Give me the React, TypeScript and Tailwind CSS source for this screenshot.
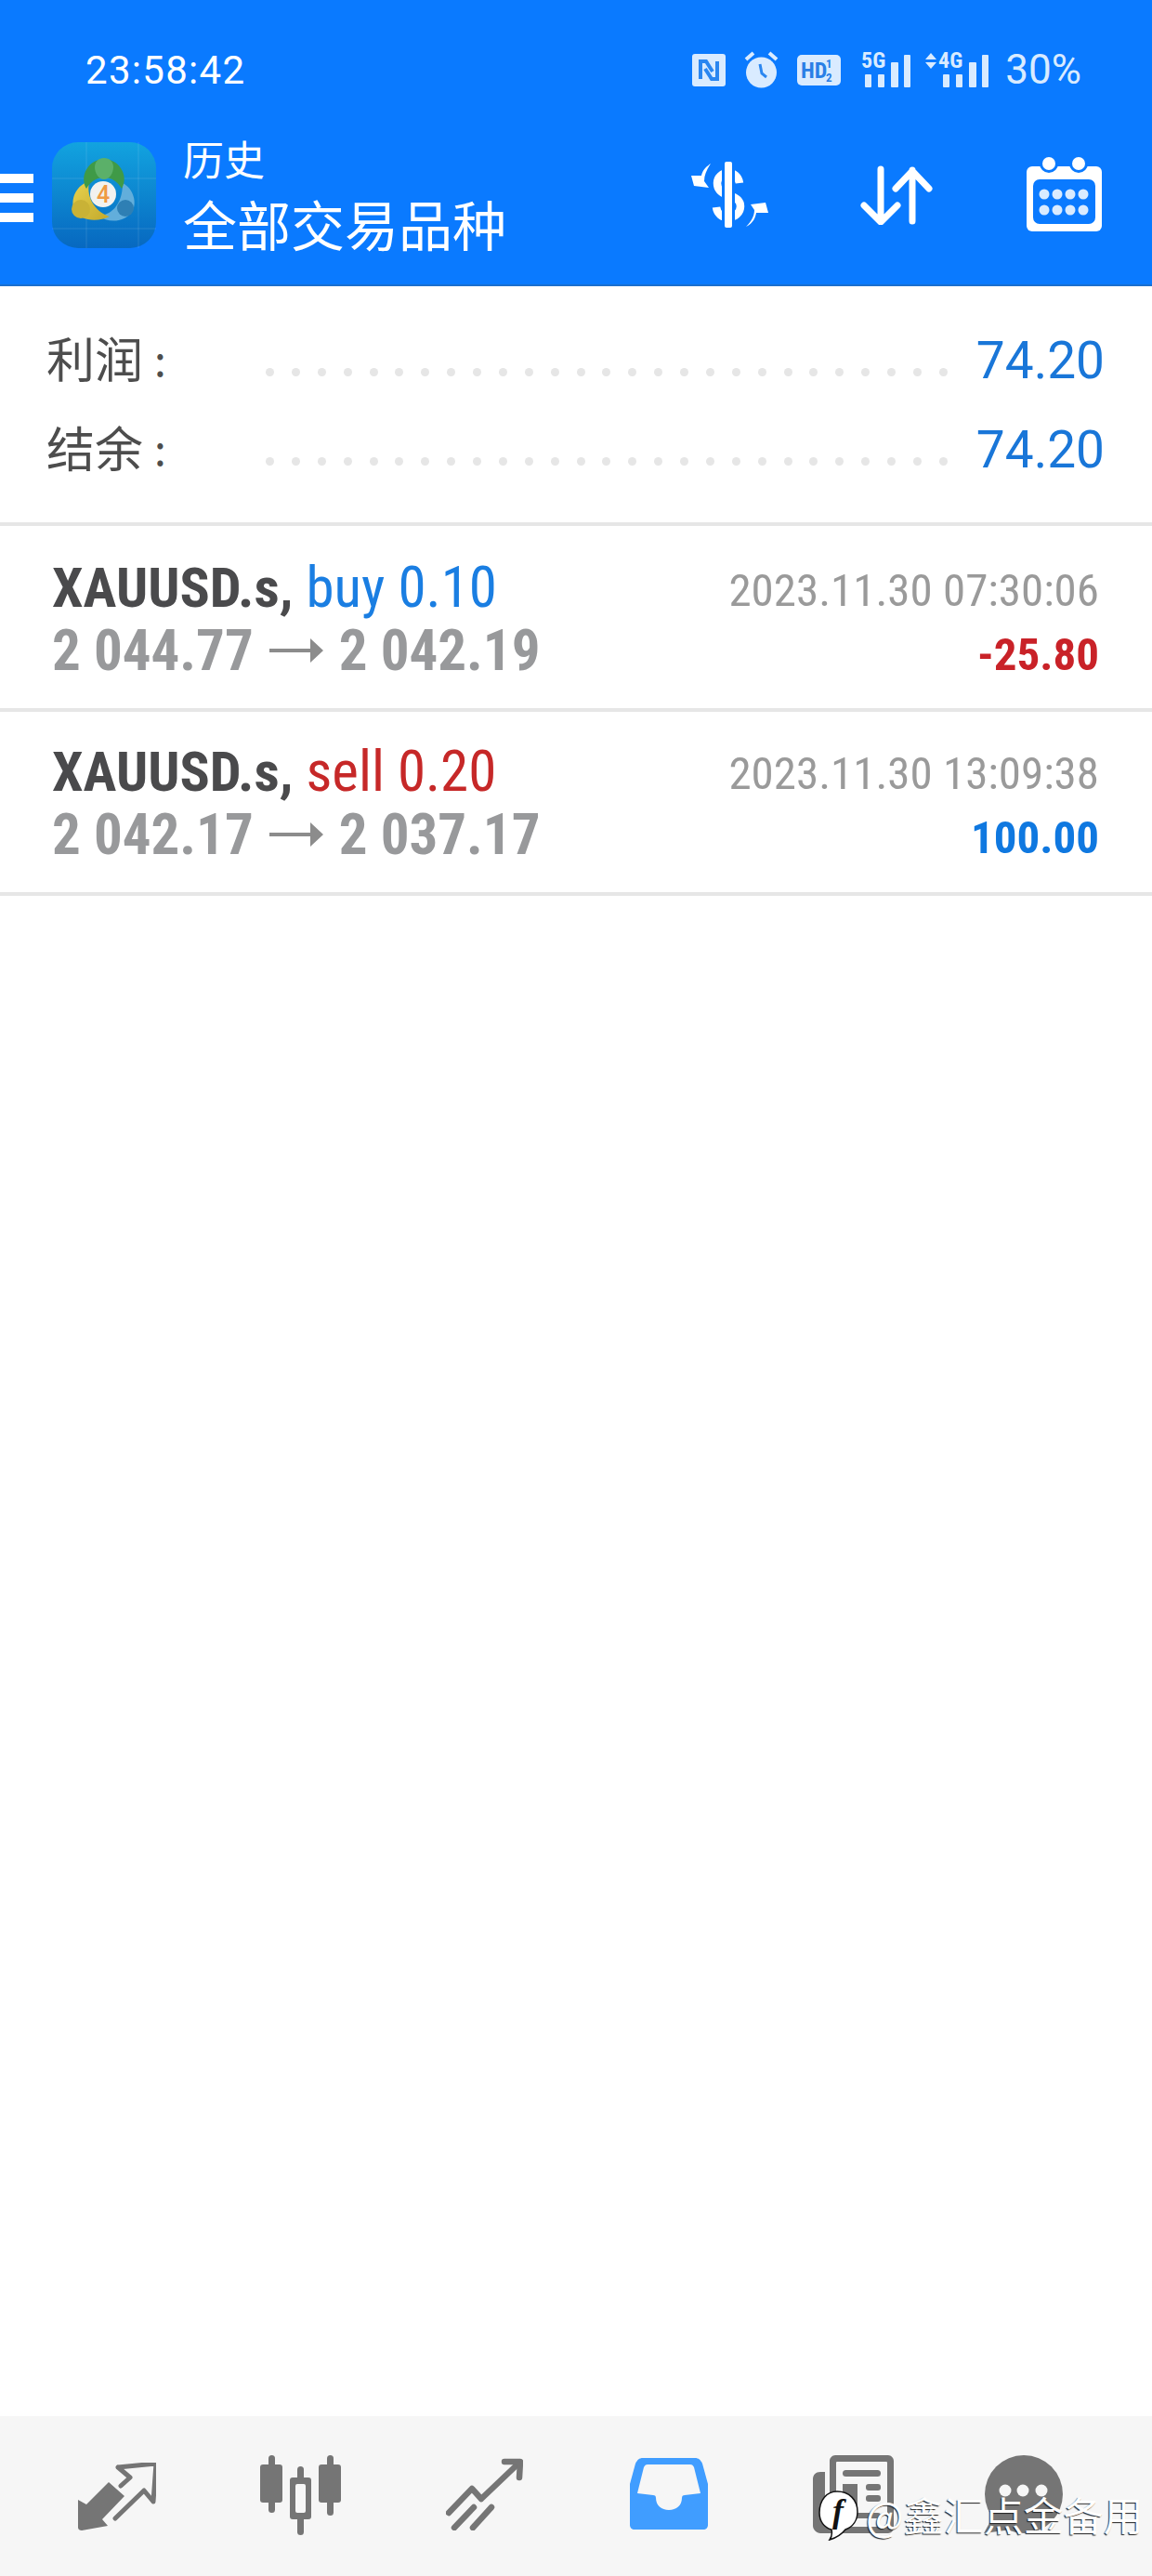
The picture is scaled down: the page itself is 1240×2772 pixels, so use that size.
import React from "react";

const ROW_DOTS = Array.from({ length: 27 });

function Dots() {
  return (
    <div className="mt-[30px] flex w-[734px] justify-between">
      {ROW_DOTS.map((_, i) => (
        <span key={i} className="h-[9px] w-[9px] rounded-full bg-[#e6e6e6]" />
      ))}
    </div>
  );
}

function Summary({ label, value }: { label: string; value: string }) {
  return (
    <div className="flex h-[96px] items-center pl-[50px] pr-[51px]">
      <div className="flex w-[236px] items-center font-['Noto_Sans_CJK_SC',sans-serif] text-[52px] leading-[96px] text-[#4d4d4d]">
        {label}
        <span className="ml-[12px] text-[46px]">:</span>
      </div>
      <Dots />
      <div className="ml-auto mt-[6px] font-['Roboto',sans-serif] text-[55px] leading-[96px] text-[#1976d8]">{value}</div>
    </div>
  );
}

function ArrowRight() {
  return (
    <svg className="mx-[17px]" width="58" height="26" viewBox="0 0 58 26">
      <path d="M0 11h44V0l14 13-14 13V15H0z" fill="#8c8c8c" />
    </svg>
  );
}

function Trade(props: {
  side: string;
  sideClass: string;
  from: string;
  to: string;
  date: string;
  profit: string;
  profitClass: string;
  topClass: string;
  rightClass: string;
  heightClass: string;
}) {
  return (
    <div className={`flex justify-between border-b-4 border-[#e6e6e6] pl-[56px] pr-[57px] font-['Roboto_Condensed',Roboto,sans-serif] ${props.heightClass}`}>
      <div className={props.topClass}>
        <div className="h-[68px] whitespace-nowrap text-[61px] leading-[68px]">
          <span className="text-[60px] font-bold text-[#4a4a4c]">XAUUSD.s,</span>{" "}
          <span className={props.sideClass}>{props.side}</span>
        </div>
        <div className="flex h-[68px] items-center whitespace-nowrap text-[61px] font-bold leading-[68px] text-[#98999b]">
          {props.from}
          <ArrowRight />
          {props.to}
        </div>
      </div>
      <div className={`text-right ${props.rightClass}`}>
        <div className="h-[69px] whitespace-nowrap text-[49px] leading-[69px] text-[#9a9a9a]">{props.date}</div>
        <div className={`h-[69px] whitespace-nowrap text-[49px] font-bold leading-[69px] ${props.profitClass}`}>{props.profit}</div>
      </div>
    </div>
  );
}

const PALE = "#d9ebff";

function Nfc() {
  return (
    <svg width="36" height="35" viewBox="0 0 36 35">
      <rect width="36" height="35" rx="3" fill={PALE} />
      <path d="M9 27V8h6l7 11M27 8v19h-6l-7-11" fill="none" stroke="#2a86f0" strokeWidth="4" />
    </svg>
  );
}

function Alarm() {
  return (
    <svg className="ml-[20px]" width="37" height="40" viewBox="0 0 37 40">
      <circle cx="18.5" cy="23" r="16.5" fill={PALE} />
      <path d="M2 9l8-7M35 9l-8-7" stroke={PALE} strokeWidth="4" />
      <path d="M17 14l2 10 5 4" fill="none" stroke="#2a86f0" strokeWidth="3" />
    </svg>
  );
}

function Hd() {
  return (
    <svg className="ml-[20px] overflow-visible" width="47" height="33" viewBox="0 0 47 33">
      <rect width="47" height="33" rx="5" fill={PALE} />
      <text x="4" y="25" fontFamily="Roboto Condensed" fontWeight="700" fontSize="24" fill="#2a7fe6">HD</text>
      <text x="31" y="14" fontFamily="Roboto Condensed" fontWeight="700" fontSize="13" fill="#2a7fe6">1</text>
      <text x="31" y="29" fontFamily="Roboto Condensed" fontWeight="700" fontSize="13" fill="#2a7fe6">2</text>
    </svg>
  );
}

function Bars({ x }: { x: number }) {
  return (
    <g fill={PALE}>
      <rect x={x} y="24" width="7" height="14" rx="1" />
      <rect x={x + 14} y="24" width="7" height="14" rx="1" />
      <rect x={x + 28} y="11" width="8" height="27" rx="1" />
      <rect x={x + 42} y="3" width="7" height="35" rx="1" />
    </g>
  );
}

function Signal5() {
  return (
    <svg className="ml-[22px] overflow-visible" width="54" height="38" viewBox="0 0 54 38">
      <text x="0" y="17" fontFamily="Roboto Condensed" fontWeight="700" fontSize="24" fill={PALE}>5G</text>
      <Bars x={4} />
    </svg>
  );
}

function Signal4() {
  return (
    <svg className="ml-[14px] overflow-visible" width="70" height="38" viewBox="0 0 70 38">
      <path d="M1 8l6-7 6 7zM1 11l6 7 6-7z" fill={PALE} />
      <text x="15" y="17" fontFamily="Roboto Condensed" fontWeight="700" fontSize="24" fill={PALE}>4G</text>
      <Bars x={20} />
    </svg>
  );
}

function Logo() {
  return (
    <svg className="ml-[20px] mt-[3px]" width="112" height="114" viewBox="0 0 112 114">
      <defs>
        <linearGradient id="lg" x1="0" y1="0" x2="0" y2="1">
          <stop offset="0" stopColor="#12a3df" />
          <stop offset="1" stopColor="#0768c0" />
        </linearGradient>
        <linearGradient id="gy" x1="0" y1="0" x2="1" y2="1">
          <stop offset="0" stopColor="#e8d24e" />
          <stop offset="1" stopColor="#c2a92c" />
        </linearGradient>
      </defs>
      <rect width="112" height="114" rx="28" fill="url(#lg)" />
      <path d="M37 0v114M0 39h112M0 93h112M93 0v114" stroke="#ffffff" strokeOpacity="0.12" strokeWidth="1" />
      <path d="M76 44c12 6 16 22 10 31-9 12-26 12-36 4 12 0 26-10 26-35z" fill="#62aedb" />
      <path d="M40 42C27 46 19 60 24 74c6 11 26 12 38 6-13-4-26-18-22-38z" fill="url(#gy)" />
      <path d="M37 50c-7-12 0-27 13-31h12c13 4 20 19 13 31-4-7-10-12-19-12s-15 5-19 12z" fill="#3f9a47" />
      <path d="M46 27c0-6 4-10 10-10s10 4 10 10-4 13-10 13-10-7-10-13z" fill="#5bb069" />
      <circle cx="31" cy="72" r="10" fill="#c9b236" />
      <circle cx="79" cy="71" r="9" fill="#2e7fb4" />
      <circle cx="55" cy="56" r="14" fill="#f2f2ef" />
      <text x="55" y="65" textAnchor="middle" fontFamily="Roboto" fontWeight="500" fontSize="25" fill="#ef9a43">4</text>
    </svg>
  );
}

function DollarIcon() {
  return (
    <svg className="mt-[24px]" width="85" height="71" viewBox="0 0 85 71">
      <path d="M53 23c-1-7-6-11-12-11-7 0-12 5-12 11 0 8 5 11 12 13 8 2 13 5 13 12 0 7-6 12-13 12-7 0-12-4-13-11" fill="none" stroke="#fff" strokeWidth="8.5" />
      <rect x="34" y="0" width="14" height="71" fill="#0a7aff" />
      <rect x="37" y="0" width="8" height="71" rx="2" fill="#fff" />
      <path d="M22 2C16 6 13 10 12 15L1 15l3 11 16 2-5-7C15 14 18 8 22 2z" fill="#fff" />
      <path d="M60 70c8-4 10-10 11-15h13l-3-11-16 2 4 6c0 6-3 12-9 18z" fill="#fff" />
    </svg>
  );
}

function ArrowsIcon() {
  return (
    <svg className="ml-[98px] mt-[28px]" width="78" height="64" viewBox="0 0 78 64" fill="none" stroke="#fff" strokeWidth="7" strokeLinecap="round" strokeLinejoin="round">
      <path d="M22 4v56M4 43l18 18 18-18" />
      <path d="M56 60V5M38 25L56 6l18 19" />
    </svg>
  );
}

function CalendarIcon() {
  return (
    <svg className="ml-[101px] mt-[18px]" width="81" height="81" viewBox="0 0 81 81">
      <rect x="0" y="11" width="81" height="70" rx="6" fill="#fff" />
      <circle cx="24" cy="8" r="10" fill="#0a7aff" />
      <circle cx="56" cy="8" r="10" fill="#0a7aff" />
      <circle cx="24" cy="8" r="7" fill="#fff" />
      <circle cx="56" cy="8" r="7" fill="#fff" />
      <rect x="7" y="25" width="67" height="48" rx="7" fill="#0a7aff" />
      {[19, 33, 47, 61].map((x) => (
        <React.Fragment key={x}>
          <circle cx={x} cy="41" r="5.5" fill="#d9ebff" />
          <circle cx={x} cy="58" r="5.5" fill="#d9ebff" />
        </React.Fragment>
      ))}
    </svg>
  );
}

function Exchange() {
  return (
    <svg className="mt-[50px]" width="84" height="74" viewBox="0 0 84 74" fill="#757575">
      <path d="M33 21l17 15-24 25 6 7-28 5c-2 0-4-1-4-3V40l9 5z" />
      <path d="M43 5l41-4-3 41-10-12-31 30M46 25l10-9-13-11" fill="none" stroke="#757575" strokeWidth="5" strokeLinejoin="round" strokeLinecap="round" />
    </svg>
  );
}

function Candles() {
  return (
    <svg className="ml-[112px] mt-[42px]" width="87" height="86" viewBox="0 0 87 86">
      <g fill="#757575">
        <rect x="9" y="0" width="7" height="62" rx="3.5" />
        <rect x="0" y="10" width="24" height="41" rx="3" />
        <rect x="40" y="12" width="7" height="74" rx="3.5" />
        <rect x="32" y="24" width="23" height="45" rx="3" />
        <rect x="72" y="0" width="7" height="65" rx="3.5" />
        <rect x="63" y="10" width="24" height="41" rx="3" />
      </g>
      <rect x="38" y="31" width="11" height="31" rx="2" fill="#f6f6f6" />
    </svg>
  );
}

function Trend() {
  return (
    <svg className="ml-[113px] mt-[45px]" width="83" height="78" viewBox="0 0 83 78" fill="none" stroke="#757575" strokeWidth="6.5" strokeLinecap="round" strokeLinejoin="round">
      <path d="M3 59l25-26 10 11L79 5" />
      <path d="M63 4h17l-1 17" />
      <path d="M9 75l21-22M29 75l20-22" />
    </svg>
  );
}

function Tray() {
  return (
    <svg className="ml-[115px] mt-[45px]" width="84" height="77" viewBox="0 0 84 77">
      <path d="M14 0h56c4 0 6 2 8 6l6 22v44c0 3-2 5-5 5H5c-3 0-5-2-5-5V28L6 6c2-4 4-6 8-6z" fill="#409dff" />
      <path d="M19 7h46c2 0 3 1 4 3l7 28-17 2c-2 0-3 1-3 3 0 8-6 13-14 13s-14-5-14-13c0-2-1-3-3-3L8 38l7-28c1-2 2-3 4-3z" fill="#f6f6f6" />
    </svg>
  );
}

function News() {
  return (
    <svg className="ml-[113px] mt-[42px]" width="87" height="84" viewBox="0 0 87 84">
      <path d="M24 0h57c3 0 6 3 6 6v72c0 3-3 6-6 6H8c-4 0-8-4-8-8V26c0-5 3-8 8-8h5v58c0 2 2 2 5 2V6c0-3 3-6 6-6z" fill="#757575" />
      <rect x="25" y="7" width="55" height="70" rx="1" fill="#f6f6f6" />
      <g fill="#757575">
        <rect x="32" y="16" width="41" height="7" rx="3.5" />
        <rect x="32" y="31" width="16" height="30" />
        <rect x="57" y="31" width="16" height="7" rx="3" />
        <rect x="57" y="43" width="16" height="7" rx="3" />
        <rect x="32" y="62" width="41" height="6" rx="3" />
      </g>
    </svg>
  );
}

function Chat() {
  return (
    <svg className="ml-[97px] mt-[42px]" width="86" height="84" viewBox="0 0 86 84">
      <circle cx="43" cy="42" r="42" fill="#757575" />
      <path d="M12 62L0 84l30-4z" fill="#757575" />
      <circle cx="23" cy="38" r="6.5" fill="#f6f6f6" />
      <circle cx="42" cy="38" r="6.5" fill="#f6f6f6" />
      <circle cx="62" cy="38" r="6.5" fill="#f6f6f6" />
    </svg>
  );
}

function Watermark() {
  return (
    <div className="absolute left-[881px] top-[80px] flex items-start">
      <svg width="44" height="54" viewBox="0 0 44 54">
        <path d="M20 1C9 1 1 10 1 24c0 9 5 16 13 18 1 4 0 8-2 11 7-2 13-6 17-11 8-3 13-10 13-19C42 10 33 1 20 1z" fill="#fff" stroke="#111" strokeWidth="1.5" />
        <text x="21" y="34" textAnchor="middle" fontFamily="Liberation Serif" fontStyle="italic" fontWeight="700" fontSize="36" fill="#111">f</text>
      </svg>
      <div className="ml-[7px] whitespace-nowrap font-['Noto_Sans_CJK_SC',sans-serif] text-[43px] font-normal leading-[50px] text-white [text-shadow:-1px_1px_1px_#222]">
        @鑫汇点金备用
      </div>
    </div>
  );
}

export default function App() {
  return (
    <div className="flex h-[2772px] w-[1240px] flex-col overflow-hidden bg-white">
      <header className="h-[308px] border-b-2 border-[#1a6fce] bg-[#0a7aff]">
        <div className="flex h-[150px] items-center pl-[92px] pr-[76px]">
          <div className="font-['Roboto',sans-serif] text-[42px] tracking-[1.3px] text-white">23:58:42</div>
          <div className="ml-auto flex items-center">
            <Nfc />
            <Alarm />
            <Hd />
            <Signal5 />
            <Signal4 />
            <div className="ml-[17px] font-['Roboto',sans-serif] text-[44px] leading-[38px] text-[#d9ebff]">30%</div>
          </div>
        </div>
        <div className="flex h-[156px] items-start pr-[54px]">
          <div className="mt-[37px] flex w-[36px] flex-col gap-[11px]">
            <span className="h-[10px] bg-white" />
            <span className="h-[10px] bg-white" />
            <span className="h-[10px] bg-white" />
          </div>
          <Logo />
          <div className="-mt-[3px] ml-[29px] font-['Noto_Sans_CJK_SC',sans-serif] text-white">
            <div className="h-[46px] text-[44px] leading-[46px]">历史</div>
            <div className="h-[94px] whitespace-nowrap text-[58px] leading-[94px]">全部交易品种</div>
          </div>
          <div className="ml-auto flex items-start">
            <DollarIcon />
            <ArrowsIcon />
            <CalendarIcon />
          </div>
        </div>
      </header>

      <section className="h-[258px] border-b-4 border-[#e6e6e6] pt-[29px]">
        <Summary label="利润" value="74.20" />
        <Summary label="结余" value="74.20" />
      </section>

      <Trade
        side="buy 0.10"
        sideClass="text-[#1a7ee2]"
        from="2 044.77"
        to="2 042.19"
        date="2023.11.30 07:30:06"
        profit="-25.80"
        profitClass="text-[#c92228]"
        topClass="pt-[32px]"
        rightClass="pt-[35px]"
        heightClass="h-[200px]"
      />
      <Trade
        side="sell 0.20"
        sideClass="text-[#c62828]"
        from="2 042.17"
        to="2 037.17"
        date="2023.11.30 13:09:38"
        profit="100.00"
        profitClass="text-[#0f78e0]"
        topClass="pt-[30px]"
        rightClass="pt-[32px]"
        heightClass="h-[198px]"
      />

      <div className="flex-1" />

      <nav className="relative flex h-[172px] items-start bg-[#f6f6f6] pl-[84px]">
        <Exchange />
        <Candles />
        <Trend />
        <Tray />
        <News />
        <Chat />
        <Watermark />
      </nav>
    </div>
  );
}
